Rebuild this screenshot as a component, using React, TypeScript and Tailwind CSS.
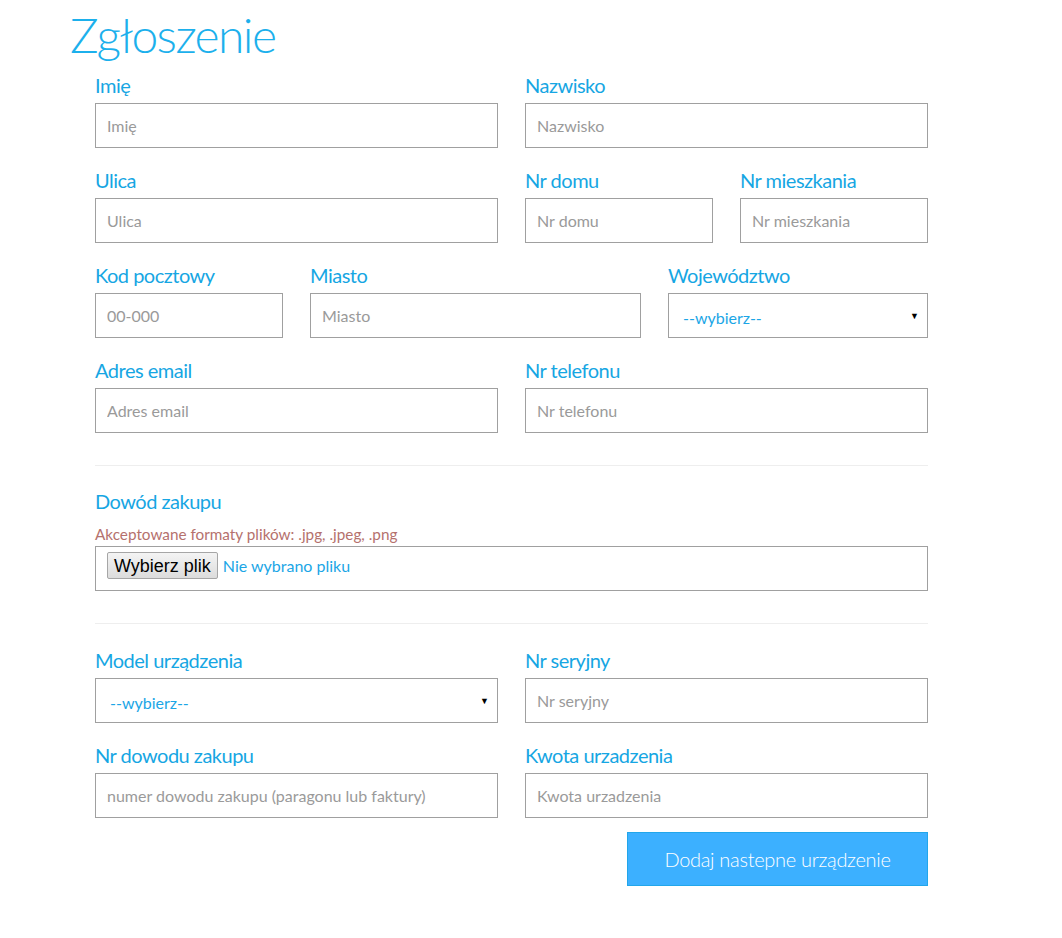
import React from "react";

const font = { fontFamily: "Lato, 'Noto Sans', sans-serif" };

function Label({ children }: { children: React.ReactNode }) {
  return (
    <div className="text-[20px] leading-[26px] text-[#16a6e3] tracking-[-0.5px] mb-[5px] whitespace-nowrap">
      {children}
    </div>
  );
}

function Field({ label, placeholder }: { label: string; placeholder: string }) {
  return (
    <div className="mb-[19px]">
      <Label>{label}</Label>
      <input
        placeholder={placeholder}
        className="block w-full h-[45px] border border-[#a0a0a0] bg-white px-[11px] text-[16px] text-[#555] placeholder:text-[#9a9a9a] outline-none"
        style={font}
      />
    </div>
  );
}

function SelectField({ label }: { label: string }) {
  return (
    <div className="mb-[19px]">
      <Label>{label}</Label>
      <div className="flex items-center justify-between h-[45px] border border-[#a0a0a0] bg-white pl-[14px] pr-[8px]">
        <span className="text-[16px] text-[#1ba6e6] pt-[4px]">--wybierz--</span>
        <span className="text-[9px] text-black leading-none">▼</span>
      </div>
    </div>
  );
}

export default function App() {
  return (
    <div className="min-h-[938px] bg-white" style={font}>
      <div className="pl-[70px] pt-[2px]">
        <h1 className="text-[48px] leading-[66px] font-light text-[#1cb0ec] tracking-[-1.6px]">Zgłoszenie</h1>
      </div>
      <div className="ml-[95px] w-[833px] mt-[4px]">
        <div className="grid grid-cols-2 gap-x-[27px]">
          <Field label="Imię" placeholder="Imię" />
          <Field label="Nazwisko" placeholder="Nazwisko" />
        </div>
        <div className="grid grid-cols-[403px_188px_188px] gap-x-[27px]">
          <Field label="Ulica" placeholder="Ulica" />
          <Field label="Nr domu" placeholder="Nr domu" />
          <Field label="Nr mieszkania" placeholder="Nr mieszkania" />
        </div>
        <div className="grid grid-cols-[188px_331px_260px] gap-x-[27px]">
          <Field label="Kod pocztowy" placeholder="00-000" />
          <Field label="Miasto" placeholder="Miasto" />
          <SelectField label="Województwo" />
        </div>
        <div className="grid grid-cols-2 gap-x-[27px]">
          <Field label="Adres email" placeholder="Adres email" />
          <Field label="Nr telefonu" placeholder="Nr telefonu" />
        </div>

        <hr className="mt-[13px] border-0 border-t border-[#eeeeee]" />

        <div className="mt-[22px]">
          <Label>Dowód zakupu</Label>
          <div className="text-[15.3px] leading-[18px] text-[#b5716d] mt-[11px] mb-[3px]">
            Akceptowane formaty plików: .jpg, .jpeg, .png
          </div>
          <div className="flex items-center h-[45px] border border-[#a0a0a0] bg-white pl-[11px] pb-[6px]">
            <button
              className="h-[27px] px-[6px] border border-[#a6a6a6] rounded-[2px] bg-gradient-to-b from-[#f4f4f4] to-[#dcdcdc] text-[18px] leading-none text-black"
              style={{ fontFamily: "'Liberation Sans', Arial, sans-serif" }}
            >
              Wybierz plik
            </button>
            <span className="ml-[5px] text-[16px] text-[#1ba6e6]">Nie wybrano pliku</span>
          </div>
        </div>

        <hr className="mt-[32px] border-0 border-t border-[#eeeeee]" />

        <div className="grid grid-cols-2 gap-x-[27px] mt-[23px]">
          <SelectField label="Model urządzenia" />
          <Field label="Nr seryjny" placeholder="Nr seryjny" />
          <Field label="Nr dowodu zakupu" placeholder="numer dowodu zakupu (paragonu lub faktury)" />
          <Field label="Kwota urzadzenia" placeholder="Kwota urzadzenia" />
        </div>

        <div className="flex justify-end -mt-[5px]">
          <button className="w-[301px] h-[54px] bg-[#3cb0ff] border border-[#22a6ea] text-white text-[20px] font-light tracking-[-0.3px]">
            Dodaj nastepne urządzenie
          </button>
        </div>
      </div>
    </div>
  );
}
